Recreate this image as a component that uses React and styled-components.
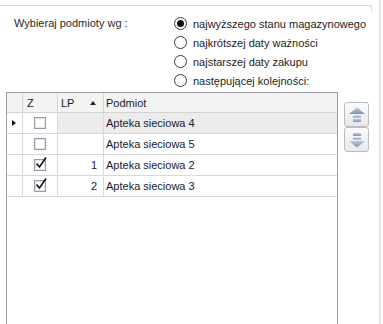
import React from 'react';
import styled, { createGlobalStyle } from 'styled-components';

const GlobalStyle = createGlobalStyle`
  html, body {
    margin: 0;
    padding: 0;
    background: #ffffff;
    overflow: hidden;
  }
  body {
    font-family: "Liberation Sans", Arial, sans-serif;
    font-size: 11px;
    color: #1c1c1c;
  }
`;

const options = [
  'najwyższego stanu magazynowego',
  'najkrótszej daty ważności',
  'najstarszej daty zakupu',
  'następującej kolejności:',
];

const rows = [
  { checked: false, lp: '', name: 'Apteka sieciowa 4', focused: true },
  { checked: false, lp: '', name: 'Apteka sieciowa 5' },
  { checked: true, lp: '1', name: 'Apteka sieciowa 2' },
  { checked: true, lp: '2', name: 'Apteka sieciowa 3' },
];

const App = () => {
  return (
    <>
      <GlobalStyle />
      <Page>
        <TopRule />
        <Options>
          <OptionsLabel>Wybieraj podmioty wg :</OptionsLabel>
          <RadioList>
            {options.map((o, i) => (
              <RadioRow key={o}>
                <Radio $selected={i === 0} />
                <span>{o}</span>
              </RadioRow>
            ))}
          </RadioList>
        </Options>

        <GridArea>
          <Grid>
            <HeaderRow>
              <HeadCell />
              <HeadCell $pad="0 0 0 4px">Z</HeadCell>
              <HeadCell $pad="0 0 0 3px">
                LP
                <SortArrow />
              </HeadCell>
              <HeadCell $pad="0 0 0 2px" $last>Podmiot</HeadCell>
            </HeaderRow>
            {rows.map((r) => (
              <Row key={r.name}>
                <Cell $center>{r.focused && <Indicator />}</Cell>
                <Cell $center>
                  <CheckBox>
                    {r.checked && (
                      <svg width="14" height="14" viewBox="0 0 14 14">
                        <path d="M2.5 7.5 L5.5 11 L12 1.5" fill="none" stroke="#111" strokeWidth="1.6" />
                      </svg>
                    )}
                  </CheckBox>
                </Cell>
                <Cell $right $focused={r.focused}>{r.lp}</Cell>
                <Cell $focused={r.focused} $last $pad="0 0 0 2px">{r.name}</Cell>
              </Row>
            ))}
          </Grid>

          <Buttons>
            <MoveButton type="button" aria-label="w górę">
              <svg width="18" height="16" viewBox="0 0 18 16">
                <defs>
                  <linearGradient id="ag" x1="0" y1="0" x2="0" y2="1">
                    <stop offset="0" stopColor="#b9cbe0" />
                    <stop offset="1" stopColor="#7d95b3" />
                  </linearGradient>
                </defs>
                <polygon points="1,7 9,0.5 17,7" fill="url(#ag)" />
                <rect x="5" y="8.5" width="8" height="2" fill="url(#ag)" />
                <rect x="5" y="12" width="8" height="3" fill="url(#ag)" />
              </svg>
            </MoveButton>
            <MoveButton type="button" aria-label="w dół">
              <svg width="18" height="16" viewBox="0 0 18 16">
                <defs>
                  <linearGradient id="ag2" x1="0" y1="0" x2="0" y2="1">
                    <stop offset="0" stopColor="#b9cbe0" />
                    <stop offset="1" stopColor="#7d95b3" />
                  </linearGradient>
                </defs>
                <rect x="5" y="1" width="8" height="3" fill="url(#ag2)" />
                <rect x="5" y="5.5" width="8" height="2" fill="url(#ag2)" />
                <polygon points="1,9 9,15.5 17,9" fill="url(#ag2)" />
              </svg>
            </MoveButton>
          </Buttons>
        </GridArea>
      </Page>
    </>
  );
};

const Page = styled.div`
  width: 381px;
  height: 324px;
  box-sizing: border-box;
  border-right: 2px solid #e4e4e4;
  display: flex;
  flex-direction: column;
  padding-top: 5px;

  & > * {
    flex-shrink: 0;
  }
`;

const TopRule = styled.div`
  width: 372px;
  height: 7px;
  border-top: 1px solid #dadada;
  border-right: 1px solid #dadada;
  box-sizing: border-box;
`;

const Options = styled.div`
  display: flex;
  padding-left: 14px;
  margin-top: 2px;
`;

const OptionsLabel = styled.div`
  width: 160px;
  height: 19px;
  line-height: 19px;
  color: #2a2a2a;
`;

const RadioList = styled.div`
  display: flex;
  flex-direction: column;
`;

const RadioRow = styled.label`
  display: flex;
  align-items: center;
  gap: 6px;
  height: 19px;
  color: #1c1c1c;
`;

const Radio = styled.span`
  width: 13px;
  height: 13px;
  box-sizing: border-box;
  border: 1px solid #3a3a3a;
  border-radius: 50%;
  background: #fff;
  display: flex;
  align-items: center;
  justify-content: center;

  &::after {
    content: '';
    display: ${(p) => (p.$selected ? 'block' : 'none')};
    width: 7px;
    height: 7px;
    border-radius: 50%;
    background: #111;
  }
`;

const GridArea = styled.div`
  display: flex;
  align-items: flex-start;
  gap: 6px;
  padding-left: 6px;
  margin-top: 2px;
  flex: 1;
  min-height: 0;
`;

const Grid = styled.div`
  width: 332px;
  height: 100%;
  box-sizing: border-box;
  border: 1px solid #9e9ea2;
  border-bottom: none;
  background: #fff;
`;

const rowCols = `
  display: grid;
  grid-template-columns: 16px 35px 46px 1fr;
`;

const HeaderRow = styled.div`
  ${rowCols}
  height: 20px;
  background: #f3f3f3;
  border-bottom: 1px solid #d4d4d4;
  box-sizing: border-box;
`;

const HeadCell = styled.div`
  display: flex;
  align-items: center;
  padding: ${(p) => p.$pad || '0'};
  border-right: ${(p) => (p.$last ? 'none' : '1px solid #d4d4d4')};
  color: #1c1c1c;
`;

const SortArrow = styled.span`
  width: 0;
  height: 0;
  margin-left: 16px;
  border-left: 3px solid transparent;
  border-right: 3px solid transparent;
  border-bottom: 4px solid #222;
`;

const Row = styled.div`
  ${rowCols}
  height: 21px;
  border-bottom: 1px solid #d8d8d8;
  box-sizing: border-box;
`;

const Cell = styled.div`
  display: flex;
  align-items: center;
  justify-content: ${(p) => (p.$center ? 'center' : p.$right ? 'flex-end' : 'flex-start')};
  padding: ${(p) => p.$pad || (p.$right ? '0 6px 0 0' : '0')};
  background: ${(p) => (p.$focused ? '#ececec' : '#fff')};
  border-right: ${(p) => (p.$last ? 'none' : '1px solid #d8d8d8')};
  color: #1a1a2a;
  white-space: nowrap;
`;

const Indicator = styled.span`
  width: 0;
  height: 0;
  border-top: 3.5px solid transparent;
  border-bottom: 3.5px solid transparent;
  border-left: 4px solid #111;
  margin-left: -2px;
`;

const CheckBox = styled.span`
  width: 12px;
  height: 12px;
  box-sizing: border-box;
  border: 1px solid #9a9aa4;
  box-shadow: inset 0 0 0 1px #e4e4ea;
  background: #fff;
  position: relative;
  margin-left: -1px;

  svg {
    position: absolute;
    left: -1px;
    top: -4px;
  }
`;

const Buttons = styled.div`
  display: flex;
  flex-direction: column;
  margin-top: 10px;
`;

const MoveButton = styled.button`
  width: 25px;
  height: 25px;
  padding: 0;
  border: 1px solid #b9bcc4;
  border-radius: 3px;
  background: linear-gradient(#fbfbfb, #e9e9ec);
  display: flex;
  align-items: center;
  justify-content: center;
`;

export default App;
